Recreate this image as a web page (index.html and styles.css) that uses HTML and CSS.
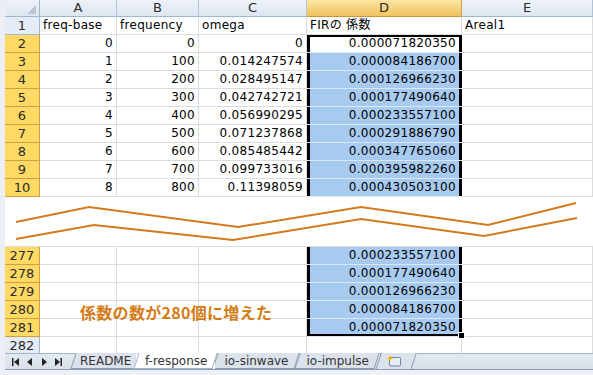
FILE: index.html
```html
<!DOCTYPE html>
<html lang="ja">
<head>
    <meta charset="UTF-8">
    <meta name="viewport" content="width=device-width, initial-scale=1.0">
    <title>f-response</title>
    <link rel="stylesheet" href="styles.css">
</head>
<body>
    <div class="sheet">
        <div class="row head">
            <div class="corner"></div>
            <div class="col">A</div>
            <div class="col">B</div>
            <div class="col">C</div>
            <div class="col on">D</div>
            <div class="col">E</div>
        </div>
        <div class="row">
            <div class="rh">1</div>
            <div class="cell">freq-base</div>
            <div class="cell">frequency</div>
            <div class="cell">omega</div>
            <div class="cell d-text">FIRの 係数</div>
            <div class="cell">Areal1</div>
        </div>
        <div class="row">
            <div class="rh hl">2</div>
            <div class="cell num">0</div>
            <div class="cell num">0</div>
            <div class="cell num">0</div>
            <div class="cell num d active top">0.000071820350</div>
            <div class="cell"></div>
        </div>
        <div class="row">
            <div class="rh hl">3</div>
            <div class="cell num">1</div>
            <div class="cell num">100</div>
            <div class="cell num">0.014247574</div>
            <div class="cell num d sel">0.000084186700</div>
            <div class="cell"></div>
        </div>
        <div class="row">
            <div class="rh hl">4</div>
            <div class="cell num">2</div>
            <div class="cell num">200</div>
            <div class="cell num">0.028495147</div>
            <div class="cell num d sel">0.000126966230</div>
            <div class="cell"></div>
        </div>
        <div class="row">
            <div class="rh hl">5</div>
            <div class="cell num">3</div>
            <div class="cell num">300</div>
            <div class="cell num">0.042742721</div>
            <div class="cell num d sel">0.000177490640</div>
            <div class="cell"></div>
        </div>
        <div class="row">
            <div class="rh hl">6</div>
            <div class="cell num">4</div>
            <div class="cell num">400</div>
            <div class="cell num">0.056990295</div>
            <div class="cell num d sel">0.000233557100</div>
            <div class="cell"></div>
        </div>
        <div class="row">
            <div class="rh hl">7</div>
            <div class="cell num">5</div>
            <div class="cell num">500</div>
            <div class="cell num">0.071237868</div>
            <div class="cell num d sel">0.000291886790</div>
            <div class="cell"></div>
        </div>
        <div class="row">
            <div class="rh hl">8</div>
            <div class="cell num">6</div>
            <div class="cell num">600</div>
            <div class="cell num">0.085485442</div>
            <div class="cell num d sel">0.000347765060</div>
            <div class="cell"></div>
        </div>
        <div class="row">
            <div class="rh hl">9</div>
            <div class="cell num">7</div>
            <div class="cell num">700</div>
            <div class="cell num">0.099733016</div>
            <div class="cell num d sel">0.000395982260</div>
            <div class="cell"></div>
        </div>
        <div class="row">
            <div class="rh hl">10</div>
            <div class="cell num">8</div>
            <div class="cell num">800</div>
            <div class="cell num">0.11398059</div>
            <div class="cell num d sel">0.000430503100</div>
            <div class="cell"></div>
        </div>

        <!-- omitted rows 11-276 -->
        <div class="break">
            <svg width="588" height="49" viewBox="0 0 588 49">
                <polyline points="11,25 84,10 233,30 356,10 483,28 571,6" fill="none" stroke="#d47a1c" stroke-width="2"/>
                <polyline points="11,42 89,28 228,43 356,22 479,39 572,21" fill="none" stroke="#d47a1c" stroke-width="2"/>
            </svg>
        </div>

        <div class="lower">
            <div class="row">
                <div class="rh hl">277</div>
                <div class="cell"></div>
                <div class="cell"></div>
                <div class="cell"></div>
                <div class="cell num d sel">0.000233557100</div>
                <div class="cell"></div>
            </div>
            <div class="row">
                <div class="rh hl">278</div>
                <div class="cell"></div>
                <div class="cell"></div>
                <div class="cell"></div>
                <div class="cell num d sel">0.000177490640</div>
                <div class="cell"></div>
            </div>
            <div class="row">
                <div class="rh hl">279</div>
                <div class="cell"></div>
                <div class="cell"></div>
                <div class="cell"></div>
                <div class="cell num d sel">0.000126966230</div>
                <div class="cell"></div>
            </div>
            <div class="row">
                <div class="rh hl">280</div>
                <div class="cell"></div>
                <div class="cell"></div>
                <div class="cell"></div>
                <div class="cell num d sel">0.000084186700</div>
                <div class="cell"></div>
            </div>
            <div class="row">
                <div class="rh hl">281</div>
                <div class="cell"></div>
                <div class="cell"></div>
                <div class="cell"></div>
                <div class="cell num d sel bottom">0.000071820350</div>
                <div class="cell"></div>
            </div>
            <div class="row">
                <div class="rh">282</div>
                <div class="cell"></div>
                <div class="cell"></div>
                <div class="cell"></div>
                <div class="cell"></div>
                <div class="cell"></div>
            </div>
            <div class="note">係数の数が280個に増えた</div>
        </div>
    </div>

    <div class="tabbar">
        <div class="nav">
            <svg width="8" height="8" viewBox="0 0 8 8"><rect x="0" y="0" width="1.5" height="8" fill="#222"/><polygon points="7,0 7,8 2,4" fill="#222"/></svg>
            <svg width="8" height="8" viewBox="0 0 8 8"><polygon points="6,0 6,8 1,4" fill="#222"/></svg>
            <svg width="8" height="8" viewBox="0 0 8 8"><polygon points="2,0 2,8 7,4" fill="#222"/></svg>
            <svg width="8" height="8" viewBox="0 0 8 8"><polygon points="1,0 1,8 6,4" fill="#222"/><rect x="6.5" y="0" width="1.5" height="8" fill="#222"/></svg>
        </div>
        <div class="tabs">
            <div class="tab first">README</div>
            <div class="tab active">f-response</div>
            <div class="tab">io-sinwave</div>
            <div class="tab">io-impulse</div>
            <div class="tab new">
                <svg width="16" height="12" viewBox="0 0 16 12">
                    <rect x="3.5" y="2.5" width="11" height="8.5" rx="1" fill="#e6eef8" stroke="#6f86a6"/>
                    <polygon points="4,0 5,2.5 7.5,3 5,4 4,6.5 3,4 0.5,3 3,2.5" fill="#f5b400"/>
                </svg>
            </div>
        </div>
    </div>
    <div class="status"></div>
</body>
</html>
```

FILE: styles.css
```css
body {
    margin: 0;
    width: 593px;
    height: 375px;
    overflow: hidden;
    background-color: #eceef7;
    font-family: "DejaVu Sans", "Noto Sans CJK JP", sans-serif;
    font-size: 12px;
    letter-spacing: 0.3px;
    color: #000;
}
.sheet {
    margin-left: 5px;
    background-color: #fff;
    position: relative;
}
.row {
    display: grid;
    grid-template-columns: 35px 77px 82px 108px 155px 131px;
    height: 18px;
}
.cell {
    box-sizing: border-box;
    border-right: 1px solid #dadcdd;
    border-bottom: 1px solid #dadcdd;
    padding: 0 3px;
    line-height: 17px;
    white-space: nowrap;
}
.num {
    text-align: right;
}
.d {
    padding-right: 6px;
    border-right: none;
    border-bottom-color: #dce7f4;
    box-shadow: inset 3px 0 #000, inset -3px 0 #000;
}
.d-text {
    padding-left: 3px;
}
.sel {
    background-color: #a7caf1;
}
.active {
    background-color: #fff;
}
.top {
    box-shadow: inset 3px 0 #000, inset -3px 0 #000, inset 0 2px #000;
}
.bottom {
    position: relative;
    box-shadow: inset 3px 0 #000, inset -3px 0 #000, inset 0 -2px #000;
}
.bottom::after {
    content: "";
    position: absolute;
    right: -3px;
    bottom: -3px;
    width: 5px;
    height: 5px;
    background-color: #000;
    border: 1px solid #fff;
}

/* headers */
.head {
    height: 17px;
}
.corner, .col, .rh {
    box-sizing: border-box;
    text-align: center;
    font-size: 13px;
    color: #2b2b2b;
    letter-spacing: 0;
}
.corner {
    position: relative;
    background: linear-gradient(#edf2f9, #dfe7f1);
    border-right: 1px solid #9eb6ce;
    border-bottom: 1px solid #9eb6ce;
}
.corner::after {
    content: "";
    position: absolute;
    right: 3px;
    bottom: 2px;
    border-left: 9px solid transparent;
    border-bottom: 9px solid #bcc6d2;
}
.col {
    line-height: 16px;
    background: linear-gradient(#eef3f9, #dde5ef);
    border-right: 1px solid #b4c3d5;
    border-bottom: 1px solid #9eb6ce;
}
.col.on {
    background: linear-gradient(#fbe5a6, #f1c35e);
    border-right-color: #d6a54a;
    border-bottom-color: #c9973d;
}
.rh {
    line-height: 17px;
    background-color: #e4ecf7;
    border-right: 1px solid #9eb6ce;
    border-bottom: 1px solid #9eb6ce;
}
.rh.hl {
    background-color: #fed964;
    border-right-color: #d29f3f;
    border-bottom-color: #d29f3f;
}

/* cut between row 10 and row 277 */
.break {
    height: 49px;
}
.break svg {
    display: block;
}
.lower {
    position: relative;
    height: 106px;
    overflow: hidden;
    border-top: 1px solid #dadcdd;
}
.note {
    position: absolute;
    left: 75px;
    top: 56px;
    font-family: "Noto Sans CJK JP", sans-serif;
    font-size: 16px;
    font-weight: bold;
    line-height: 18px;
    letter-spacing: 0.3px;
    color: #d57b14;
}

/* sheet tabs */
.tabbar {
    display: flex;
    height: 15px;
    margin-left: 5px;
    background: linear-gradient(#e3e9f1, #d8e0ea);
    border-top: 1px solid #a3b3c8;
    border-bottom: 1px solid #8d9cb1;
}
.nav {
    display: flex;
    align-items: center;
    gap: 6px;
    width: 63px;
    box-sizing: border-box;
    padding-left: 7px;
}
.tabs {
    display: flex;
    position: relative;
    z-index: 0;
}
.tab {
    position: relative;
    height: 15px;
    line-height: 15px;
    padding: 0 9px;
    color: #333;
    font-size: 12px;
    letter-spacing: 0;
}
.tab::before {
    content: "";
    position: absolute;
    top: -1px;
    bottom: 0;
    left: 0;
    right: 0;
    z-index: -1;
    background-color: #dbe2eb;
    border: 1px solid #8d9cb1;
    border-top: none;
    transform: skewX(-18deg);
}
.tab.first::before {
    left: 3px;
}
.tab.first {
    width: 49px;
    margin-left: 2px;
    padding: 0 9px 0 10px;
}
.tab.active {
    z-index: 1;
    margin-left: -2px;
    padding: 0 8px 0 9px;
}
.tab.active::before {
    background-color: #fff;
    border-color: #a3b3c8;
}
.tab.new {
    width: 20px;
    padding: 1px 8px 0 8px;
}
.tab.new svg {
    display: block;
}
.status {
    height: 7px;
    margin-left: 5px;
    background-color: #eef0f8;
}
```
